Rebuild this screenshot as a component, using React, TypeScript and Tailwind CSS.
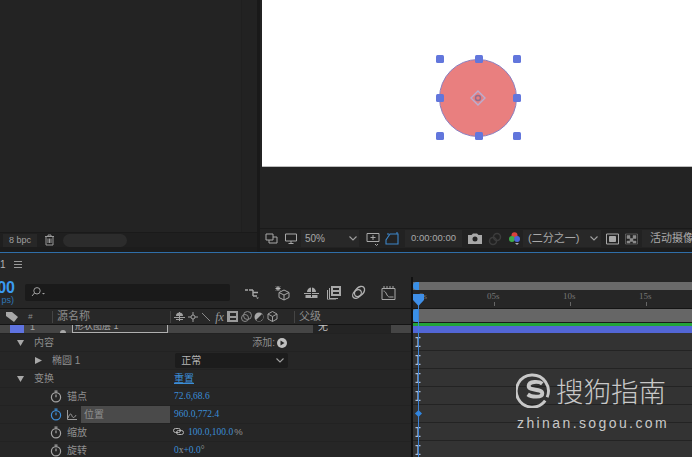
import React from "react";

const Handle = ({ x, y }: { x: number; y: number }) => (
  <div className="absolute w-[8px] h-[8px] rounded-[1.5px] bg-[#6276dc]" style={{ left: x - 4, top: y - 4 }} />
);

const Stopwatch = ({ active = false }: { active?: boolean }) => (
  <svg width="12" height="13" viewBox="0 0 12 13" fill="none" stroke={active ? "#3f8fd8" : "#a5a5a5"} strokeWidth="1.2">
    <circle cx="6" cy="7.3" r="4.6" />
    <path d="M4.5 1.2h3M6 7.3V4.5" />
  </svg>
);

const Tri = ({ open = true }: { open?: boolean }) =>
  open ? (
    <svg width="7" height="7" viewBox="0 0 7 7" fill="#a8a8a8"><path d="M0 1h7L3.500 7z" /></svg>
  ) : (
    <svg width="7" height="7" viewBox="0 0 7 7" fill="#a8a8a8"><path d="M0 0l7 3.500L0 7z" /></svg>
  );

const Chevron = ({ c = "#a0a0a0" }: { c?: string }) => (
  <svg width="8" height="5" viewBox="0 0 8 5" fill="none" stroke={c} strokeWidth="1.1"><path d="M.5.5L4 4 7.500.5" /></svg>
);

const Row = ({ children, className = "" }: { children?: React.ReactNode; className?: string }) => (
  <div className={`h-[18px] flex items-center border-t border-[#222222] ${className}`}>{children}</div>
);

const Beam = () => (
  <svg width="6" height="10" viewBox="0 0 6 10" fill="none" stroke="#a9bcd8" strokeWidth="1.3"><path d="M.5.600h5M.5 9.400h5M3 .600v8.800" /></svg>
);

const TlRow = ({ diamond = false }: { diamond?: boolean }) => (
  <div className="h-[18px] flex items-center border-b border-[#232323] pl-[2px]">
    {diamond ? <div className="w-[5px] h-[5px] ml-[0.5px] rotate-45 bg-[#2f86e0]" /> : <Beam />}
  </div>
);

const Sw = ({ children }: { children: React.ReactNode }) => (
  <div className="w-[13.3px] flex justify-center items-center">{children}</div>
);

const valueFont = { fontFamily: '"Liberation Serif","Noto Sans CJK SC",serif' };

export default function App() {
  return (
    <div
      className="relative w-[692px] h-[457px] overflow-hidden bg-[#262626] flex flex-col text-[#9a9a9a]"
      style={{ fontFamily: '"Liberation Sans","Noto Sans CJK SC",sans-serif' }}
    >
      {/* top panels */}
      <div className="h-[252px] flex shrink-0 bg-[#1c1c1c]">
        <div className="w-[257px] flex flex-col">
          <div className="h-[232px] flex bg-[#232323]">
            <div className="flex-1" />
            <div className="w-[16px] bg-[#222222] border-l border-[#1f1f1f]" />
          </div>
          <div className="h-[15px] flex items-center bg-[#1f1f1f] border-t border-[#1a1a1a]">
            <div className="ml-[3px] w-[34px] h-[13px] bg-[#272727] text-[9px] leading-[13px] text-center text-[#a0a0a0]">8 bpc</div>
            <svg className="ml-[7px]" width="11" height="12" viewBox="0 0 11 12" fill="none" stroke="#9a9a9a" strokeWidth="1">
              <path d="M1 2.500h9M4 2.500V1h3v1.500M2 2.500V11h7V2.500M4 4.500V9M5.500 4.500V9M7 4.500V9" />
            </svg>
            <div className="ml-[8px] w-[64px] h-[13px] rounded-full bg-[#2c2c2c]" />
          </div>
          <div className="flex-1 bg-[#1c1c1c]" />
        </div>
        <div className="w-[3px] bg-[#191919]" />
        <div className="flex-1 flex flex-col min-w-0">
          <div className="h-[228px] bg-[#232323] pl-[2px]">
            <div className="relative h-[167px] bg-white border-b border-[#bdbdbd]">
              <div className="absolute left-[177px] top-[59px] w-[78px] h-[78px] rounded-full bg-[#e97f7f] border border-[#8a7fc0]" />
              <Handle x={178} y={59} />
              <Handle x={217} y={59} />
              <Handle x={255} y={59} />
              <Handle x={178} y={98} />
              <Handle x={255} y={98} />
              <Handle x={178} y={136} />
              <Handle x={217} y={136} />
              <Handle x={255} y={136} />
              <svg className="absolute left-[207px] top-[89px]" width="18" height="18" viewBox="0 0 18 18" fill="none" stroke="#b9aed0" strokeWidth="1.4">
                <path d="M9 2l7 7-7 7-7-7z" />
                <circle cx="9" cy="9" r="2.500" stroke="#8f6f90" />
              </svg>
            </div>
          </div>
          <div className="h-[20px] flex items-center bg-[#222222] whitespace-nowrap text-[10px] text-[#a8a8a8] border-t border-[#1a1a1a]">
            <svg className="ml-[5px]" width="13" height="12" viewBox="0 0 13 12" fill="none" stroke="#a8a8a8">
              <path d="M1 1h7v6H1zM4 7v3h8V4H8" />
            </svg>
            <svg className="ml-[7px]" width="12" height="12" viewBox="0 0 12 12" fill="none" stroke="#a8a8a8">
              <path d="M.5 1h11v7H.5zM6 8v2M3.500 10.500h5" />
            </svg>
            <div className="ml-[4px] w-[58px] h-[17px] bg-[#282828] flex items-center justify-between pl-[4px] pr-[2px]">
              <span>50%</span>
              <Chevron />
            </div>
            <svg className="ml-[7px]" width="14" height="14" viewBox="0 0 14 14" fill="none" stroke="#a8a8a8">
              <path d="M1 1.500h12v8H1zM7 3v5M4.500 5.500h5M9 12l1.500 1.500L12 12" />
            </svg>
            <svg className="ml-[5px]" width="15" height="14" viewBox="0 0 15 14" fill="none" stroke="#3d86c9" strokeWidth="1.1">
              <path d="M1 12h12V2H5L1 8zM3 1v2M12 0v2" />
            </svg>
            <div className="ml-[5px] w-[57px] h-[17px] bg-[#282828] flex items-center justify-center text-[9.5px]">0:00:00:00</div>
            <svg className="ml-[6px]" width="14" height="11" viewBox="0 0 14 11" fill="#a8a8a8">
              <path d="M0 2h3.500L5 .5h4L10.500 2H14v9H0zM7 3.500a2.500 2.500 0 100 5 2.500 2.500 0 000-5z" fillRule="evenodd" />
            </svg>
            <svg className="ml-[6px]" width="14" height="14" viewBox="0 0 14 14" fill="none" stroke="#3c3c3c" strokeWidth="1.5">
              <circle cx="9" cy="5" r="3.500" />
              <circle cx="5" cy="9" r="3.500" />
            </svg>
            <svg className="ml-[7px]" width="11" height="14" viewBox="0 0 11 14">
              <circle cx="5.500" cy="3.200" r="3" fill="#d8423c" />
              <circle cx="2.900" cy="7" r="2.900" fill="#3dab4a" />
              <circle cx="8.100" cy="7" r="2.900" fill="#4a66d8" />
              <path d="M6 11h4l-2 2z" fill="#a8a8a8" />
            </svg>
            <div className="ml-[3px] w-[78px] h-[17px] bg-[#282828] flex items-center justify-between pl-[5px] pr-[3px] text-[11px]">
              <span>(二分之一)</span>
              <Chevron />
            </div>
            <svg className="ml-[5px]" width="13" height="12" viewBox="0 0 13 12" fill="none" stroke="#a8a8a8">
              <path d="M.5 1h12v10H.5z" />
              <path d="M3.500 3.500h6v5h-6z" fill="#a8a8a8" />
            </svg>
            <svg className="ml-[6px]" width="13" height="12" viewBox="0 0 13 12" fill="#8a8a8a" stroke="#8a8a8a" strokeWidth="0.5">
              <path d="M.5 1h12v10H.5z" fill="none" />
              <path d="M2 2.500h3v3H2zM8 2.500h3v3H8zM5 5.500h3v3H5zM2 8h3v2H2zM8 8h3v2H8z" />
            </svg>
            <div className="ml-[4px] pl-[8px] h-[17px] flex-1 bg-[#282828] text-[11px] leading-[17px] overflow-hidden">活动摄像</div>
          </div>
          <div className="flex-1 bg-[#1c1c1c]" />
        </div>
      </div>

      <div className="h-[1px] bg-[#2f6ea8] shrink-0" />

      {/* tab row */}
      <div className="h-[23px] mb-[1px] shrink-0 flex items-center text-[10px] text-[#b5b5b5] bg-[#262626]">
        <span>1</span>
        <svg className="ml-[8px]" width="8" height="7" viewBox="0 0 8 7" stroke="#9a9a9a"><path d="M0 .5h8M0 3.500h8M0 6.500h8" /></svg>
      </div>

      {/* timeline */}
      <div className="flex-1 flex min-h-0">
        <div className="w-[411px] shrink-0 flex flex-col">
          <div className="h-[31px] flex items-center shrink-0">
            <div className="w-[25px] overflow-hidden relative h-[31px]">
              <span className="absolute right-[10px] top-[2px] text-[16px] font-bold text-[#3a9bf0] leading-[18px]">00</span>
              <span className="absolute right-[11px] top-[18px] text-[9px] text-[#2f76b6] leading-[11px]">ps)</span>
            </div>
            <div className="w-[205px] h-[17px] -mt-[1px] bg-[#1a1a1a] rounded-[2px] flex items-center pl-[6px]">
              <svg width="14" height="10" viewBox="0 0 14 10" fill="none" stroke="#a0a0a0">
                <circle cx="6" cy="3.800" r="3.200" />
                <path d="M3.500 6L1 9" />
                <path d="M11 6h3l-1.500 1.500z" fill="#a0a0a0" stroke="none" />
              </svg>
            </div>
            <svg className="ml-[14px]" width="16" height="14" viewBox="0 0 16 14" fill="none" stroke="#a8a8a8">
              <path d="M1 4h3M5 4h4M9 4v6M9 6.500h5M9 10h4" strokeWidth="1.400" />
              <path d="M12 11.500h3l-1.500 1.500z" fill="#a8a8a8" stroke="none" />
            </svg>
            <svg className="ml-[14px]" width="16" height="16" viewBox="0 0 16 16" fill="none" stroke="#a8a8a8">
              <path d="M4 1v5M1.500 3.500h5M2 1.500l4 4M6 1.500l-4 4" stroke="#b8b8b8" />
              <path d="M10 5l5 2.500v5L10 15l-5-2.500v-5zM5 7.500l5 2.500 5-2.500M10 10v5" />
            </svg>
            <svg className="ml-[14px]" width="15" height="13" viewBox="0 0 15 13" fill="#a8a8a8">
              <path d="M3 6a4.500 4.500 0 019 0zM0 7h15v1H0zM1.500 9h12v3h-12z" />
              <path d="M7 1h1v10H7z" fill="#262626" />
            </svg>
            <svg className="ml-[8px]" width="14" height="14" viewBox="0 0 14 14" fill="#a8a8a8">
              <path d="M4 0h10v10H4z" />
              <path d="M2 2h1v10h8v1H2zM0 4h1v10h8v-.5H0z" />
              <path d="M6 2h6v2H6zM6 6h6v2H6z" fill="#262626" />
            </svg>
            <svg className="ml-[10px]" width="15" height="15" viewBox="0 0 15 15" fill="none" stroke="#b0b0b0" strokeWidth="1.300">
              <ellipse cx="8.500" cy="6.500" rx="6" ry="4" transform="rotate(-45 8.500 6.500)" />
              <ellipse cx="6" cy="9" rx="5" ry="3.500" transform="rotate(-45 6 9)" />
            </svg>
            <svg className="ml-[15px]" width="15" height="14" viewBox="0 0 15 14" fill="none" stroke="#a8a8a8">
              <path d="M1 2.500h13v11H1zM3 0v2M6 0v2M9 0v2M12 0v2M2.500 5c3 0 3 6 6 6h4" />
            </svg>
          </div>
          {/* col headers */}
          <div className="h-[17px] shrink-0 flex items-center border-y border-[#141414] text-[11px] text-[#8d8d8d] bg-[#282828]">
            <svg className="ml-[6px]" width="12" height="10" viewBox="0 0 12 10" fill="#a8a8a8"><path d="M0 0h6l6 5-4 5-8-6z" /></svg>
            <span className="ml-[10px] text-[8px] italic w-[24px]">#</span>
            <div className="w-px h-[12px] bg-[#444444]" />
            <span className="ml-[4px] w-[113px]">源名称</span>
            <div className="w-px h-[12px] bg-[#444444]" />
            <div className="ml-[2px] w-[121px] flex items-center">
              <Sw><svg width="11" height="11" viewBox="0 0 11 11" fill="#a0a0a0"><path d="M2 5a3.500 3.500 0 017 0zM0 6h11v1H0zM5 1h1v9H5zM2 8h7v1H2z" /></svg></Sw>
              <Sw><svg width="10" height="10" viewBox="0 0 10 10" fill="none" stroke="#a0a0a0"><circle cx="5" cy="5" r="2" /><path d="M5 0v3M5 7v3M0 5h3M7 5h3" /></svg></Sw>
              <Sw><svg width="10" height="10" viewBox="0 0 10 10" stroke="#8a8a8a"><path d="M1 1l8 8" /></svg></Sw>
              <Sw><span className="italic text-[12px] leading-none text-[#9a9a9a]" style={{ fontFamily: '"Liberation Serif",serif' }}>fx</span></Sw>
              <Sw><svg width="11" height="11" viewBox="0 0 11 11" fill="#9a9a9a"><path d="M0 0h11v11H0zM3 2v3h6V2zM3 7v2h6V7z" fillRule="evenodd" /></svg></Sw>
              <Sw><svg width="11" height="11" viewBox="0 0 11 11" fill="none" stroke="#8a8a8a"><circle cx="6.500" cy="4.500" r="4" /><circle cx="4" cy="7" r="3.500" /></svg></Sw>
              <Sw><svg width="10" height="10" viewBox="0 0 10 10"><circle cx="5" cy="5" r="4.500" fill="#a8a8a8" /><path d="M8 2L2 8a4 4 0 006-6z" fill="#262626" /></svg></Sw>
              <Sw><svg width="11" height="11" viewBox="0 0 11 11" fill="none" stroke="#a0a0a0"><path d="M5.500.5l4.500 2.500v5l-4.500 2.500L1 8V3zM1 3l4.500 2.500L10 3M5.500 5.500v5" /></svg></Sw>
            </div>
            <div className="w-px h-[12px] bg-[#444444]" />
            <span className="ml-[4px]">父级</span>
          </div>
          {/* layer row, cut by the header above it */}
          <div className="h-[8px] shrink-0 flex items-end overflow-hidden bg-[#454545]">
            <div className="ml-[10px] w-[14px] h-[8px] bg-[#5f73e0]" />
            <div className="ml-[6px] w-[30px] h-[8px] text-[9px] leading-[4px] text-[#a8a8a8]">1</div>
            <div className="w-[6px] h-[4px] bg-[#a8a8a8] rounded-t-full -mb-[1px]" />
            <div className="ml-[6px] w-[96px] h-[8px] border-x border-b border-[#b0b0b0] bg-[#333333] text-[9px] leading-[2px] text-[#a8a8a8] pl-[2px] overflow-hidden whitespace-nowrap">形状图层 1</div>
            <div className="ml-[145px] w-[78px] h-[8px] bg-[#242424] text-[10px] leading-[4px] text-[#c0c0c0] pl-[5px] overflow-hidden">无</div>
          </div>
          {/* property rows */}
          <div className="text-[10px] text-[#8f8f8f]">
            <Row>
              <div className="ml-[17px] w-[17px]"><Tri /></div>
              <span>内容</span>
              <span className="ml-auto mr-[2px]">添加:</span>
              <svg className="mr-[124px]" width="10" height="10" viewBox="0 0 10 10"><circle cx="5" cy="5" r="5" fill="#c0c0c0" /><path d="M3.500 2.500L7.500 5l-4 2.500z" fill="#262626" /></svg>
            </Row>
            <Row>
              <div className="ml-[35px] w-[17px]"><Tri open={false} /></div>
              <span>椭圆 1</span>
              <div className="ml-[95px] w-[113px] h-[15px] bg-[#1c1c1c] rounded-[2px] flex items-center justify-between pl-[6px] pr-[4px] text-[#b5b5b5]">
                <span>正常</span>
                <Chevron />
              </div>
            </Row>
            <Row>
              <div className="ml-[17px] w-[17px]"><Tri /></div>
              <span className="w-[140px]">变换</span>
              <span className="text-[#3b8dd6] underline">重置</span>
            </Row>
            <Row>
              <div className="ml-[50px] w-[17px]"><Stopwatch /></div>
              <span className="w-[107px]">锚点</span>
              <span className="text-[#3b8dd6] text-[9.5px]" style={valueFont}>72.6,68.6</span>
            </Row>
            <Row>
              <div className="ml-[50px] w-[17px]"><Stopwatch active /></div>
              <svg width="10" height="10" viewBox="0 0 10 10" fill="none" stroke="#9a9a9a"><path d="M.5 0v9.500H10M1 8c2-5 3-5 4-2s3 1 4-1" /></svg>
              <div className="ml-[4px] w-[89px] h-[17px] bg-[#4a4a4a] pl-[3px] leading-[17px] mr-[4px]">位置</div>
              <span className="text-[#3b8dd6] text-[9.5px]" style={valueFont}>960.0,772.4</span>
            </Row>
            <Row>
              <div className="ml-[50px] w-[17px]"><Stopwatch /></div>
              <span className="w-[106px]">缩放</span>
              <svg className="-mt-[3px]" width="11" height="7" viewBox="0 0 11 7" fill="none" stroke="#b5b5b5"><rect x=".5" y=".5" width="7" height="4" rx="2" /><rect x="3.500" y="2.500" width="7" height="4" rx="2" /></svg>
              <span className="ml-[4px] text-[#3b8dd6] text-[9.5px]" style={valueFont}>100.0,100.0</span>
              <span className="ml-[1px] text-[9.5px]">%</span>
            </Row>
            <Row>
              <div className="ml-[50px] w-[17px]"><Stopwatch /></div>
              <span className="w-[107px]">旋转</span>
              <span className="text-[#3b8dd6] text-[9.5px]" style={valueFont}>0<span className="text-[#999999]">x</span>+0.0<span className="text-[#999999]">°</span></span>
            </Row>
          </div>
        </div>
        <div className="w-[2px] bg-[#111111] shrink-0" />
        <div className="flex-1 flex flex-col min-w-0">
          <div className="h-[31px] shrink-0 pt-[5px] bg-[#262626]">
            <div className="relative h-[8px] bg-[#6a6a6a]">
              <div className="absolute left-0 top-0 w-[6px] h-[8px] rounded-l-full bg-[#3a8fe6]" />
            </div>
            <div className="flex text-[9px] leading-[10px] text-[#777777] mt-[1px] h-[10px]" style={{ fontFamily: '"Liberation Serif",serif' }}>
              <span className="ml-[6px] w-[68px]">0s</span>
              <span className="w-[76px]">05s</span>
              <span className="w-[76px]">10s</span>
              <span>15s</span>
            </div>
            <div className="flex mt-[1px] h-[4px]">
              <div className="ml-[81px] w-px h-[4px] bg-[#666666]" />
              <div className="ml-[75px] w-px h-[4px] bg-[#666666]" />
              <div className="ml-[75px] w-px h-[4px] bg-[#666666]" />
            </div>
          </div>
          <div className="h-[14px] shrink-0 bg-[#666666] border-t border-[#141414]">
            <div className="w-[5px] h-[13px] bg-[#3a8fe6] rounded-l-[3px]" />
          </div>
          <div className="h-[4px] shrink-0 bg-[#22a33a] border-t border-[#1a1a1a]" />
          <div className="h-[7px] shrink-0 bg-[#5266d6]" />
          <div className="flex-1 bg-[#333333]">
            <TlRow />
            <TlRow />
            <TlRow />
            <TlRow />
            <TlRow diamond />
            <TlRow />
            <TlRow />
          </div>
        </div>
      </div>

      {/* playhead (overlays the timeline) */}
      <div className="absolute left-[418px] top-[304px] w-px h-[153px] bg-[#3b82d6]" />
      <svg className="absolute left-[413px] top-[294px]" width="11" height="12" viewBox="0 0 11 12" fill="#3f8fe8"><path d="M0 0h11v6l-5.500 6-5.500-6z" /></svg>

      {/* watermark */}
      <div className="absolute left-[516px] top-[371px] flex flex-col items-start text-[#c8c8c8]">
        <div className="flex items-center">
          <svg width="37" height="37" viewBox="0 0 38 38" fill="none">
            <path d="M30 30.500A16.500 16.500 0 1132 27" stroke="#c8c8c8" strokeWidth="3" />
            <path d="M27 13c-3-2.500-14-3-14 2.500s14 2 14 7.500c0 4.500-11 4-15 1" stroke="#c8c8c8" strokeWidth="4" />
          </svg>
          <span className="text-[27.5px] leading-[30px] ml-[3px]" style={{ fontFamily: '"Noto Sans CJK SC",sans-serif', fontWeight: 300 }}>搜狗指南</span>
        </div>
        <span className="text-[14px] leading-[16px] tracking-[2.4px] mt-[7px] ml-[1px]">zhinan.sogou.com</span>
      </div>
    </div>
  );
}
